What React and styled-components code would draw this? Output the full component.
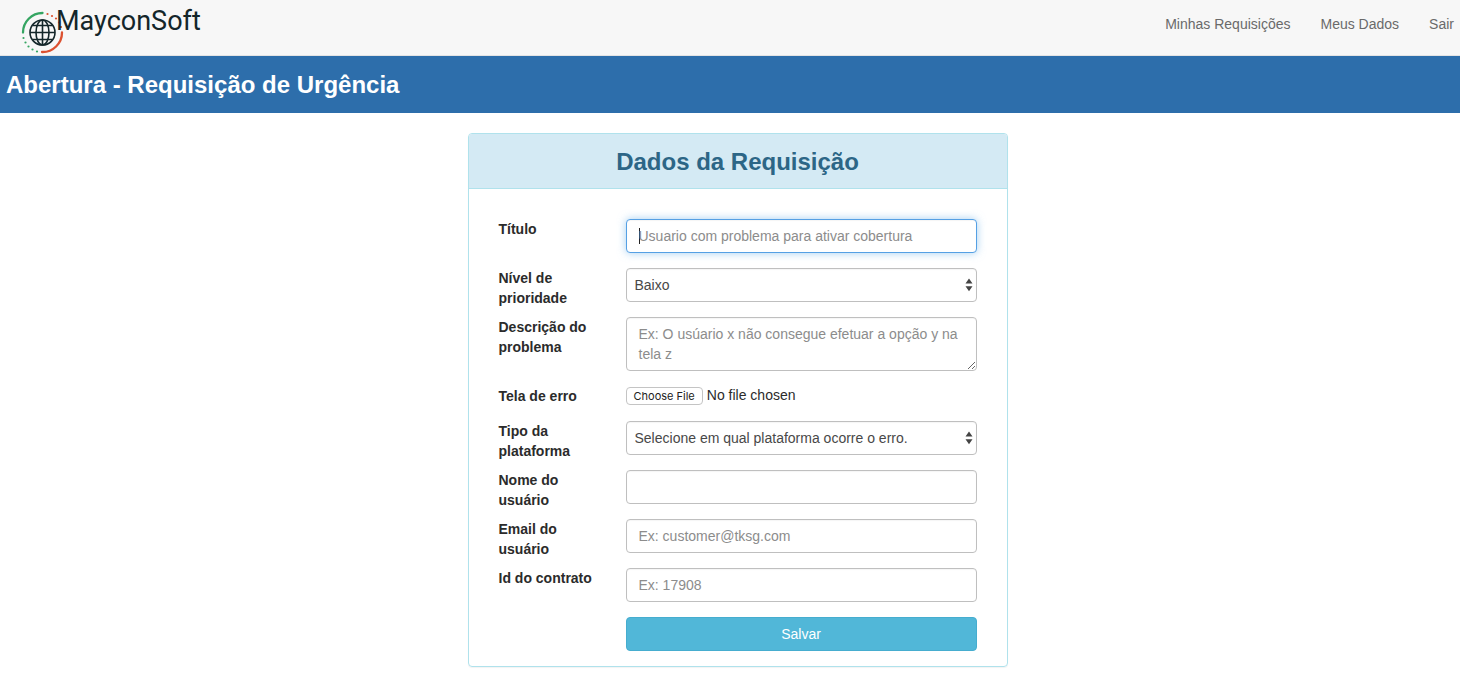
import React from "react";
import styled, { createGlobalStyle, css } from "styled-components";

const GlobalStyle = createGlobalStyle`
  *, *::before, *::after { box-sizing: border-box; }
  body {
    margin: 0;
    background: #fff;
    color: #2b2b2b;
    font: 14px/20px "Helvetica Neue", "Liberation Sans", Arial, sans-serif;
  }
`;

const Navbar = styled.nav`
  display: flex;
  justify-content: space-between;
  align-items: flex-start;
  height: 56px;
  padding: 0 6px 0 20px;
  background: #f7f7f7;
  border-bottom: 1px solid #e4e4e4;
`;

const Brand = styled.a`
  display: flex;
  align-items: flex-start;
  color: #14262a;
  text-decoration: none;
`;

const LogoMark = styled.svg`
  width: 44px;
  height: 44px;
  margin-top: 10px;
`;

const BrandName = styled.span`
  margin: 5px 0 0 -8px;
  font: 400 27px/32px Roboto, sans-serif;
`;

const NavLinks = styled.div`
  display: flex;
  gap: 30px;
  padding-top: 14px;
`;

const NavLink = styled.a`
  color: #6a6a6a;
  text-decoration: none;
`;

const Banner = styled.header`
  padding: 16px 6px 15px;
  background: #2d6eab;
`;

const BannerTitle = styled.h1`
  margin: 0;
  color: #fff;
  font-size: 24px;
  line-height: 26px;
  font-weight: 700;
`;

const Content = styled.main`
  display: flex;
  justify-content: center;
  padding: 20px 0 18px 15px;
`;

const Panel = styled.section`
  width: 100%;
  max-width: 540px;
  border: 1px solid #b0e2ec;
  border-radius: 4px;
  box-shadow: 0 1px 1px rgba(0, 0, 0, 0.05);
  overflow: hidden;
`;

const PanelHeading = styled.h2`
  margin: 0;
  padding: 15px 15px 13px;
  background: #d4eaf4;
  border-bottom: 1px solid #b0e2ec;
  color: #2c6686;
  font-size: 24px;
  line-height: 26px;
  font-weight: 700;
  text-align: center;
`;

const Form = styled.form`
  display: grid;
  gap: 15px;
  padding: 30px 30px 15px;
`;

const Row = styled.div`
  display: grid;
  grid-template-columns: 97px 1fr;
  column-gap: 30px;
  align-items: start;
`;

/* Two-line labels may run into the gap below their row. */
const Label = styled.label`
  margin-bottom: -10px;
  font-weight: 700;
`;

const control = css`
  display: block;
  width: 100%;
  height: 34px;
  padding: 6px 12px;
  border: 1px solid #bfbfbf;
  border-radius: 4px;
  background: #fff;
  box-shadow: inset 0 1px 1px rgba(0, 0, 0, 0.04);
  color: #484848;
  font: inherit;

  &::placeholder {
    color: #8c8c8c;
    opacity: 1;
  }

  &:focus {
    outline: 0;
    border-color: #55a0e4;
    box-shadow: inset 0 1px 1px rgba(0, 0, 0, 0.04), 0 0 8px rgba(102, 175, 233, 0.6);
  }
`;

/* While the field is empty, a steady caret stands before the placeholder. */
const TextInput = styled.input`
  ${control}

  &:focus:placeholder-shown {
    caret-color: transparent;
    background: #fff linear-gradient(#222, #222) 12px center / 1px 16px no-repeat;
  }
`;

const TextArea = styled.textarea`
  ${control}
  height: 54px;
  resize: vertical;
  overflow: auto;
`;

const SelectBox = styled.div`
  position: relative;
`;

const Select = styled.select`
  ${control}
  appearance: none;
  padding: 6px 24px 6px 8px;
`;

const SelectArrows = styled.svg`
  position: absolute;
  top: 10px;
  right: 4px;
  width: 8px;
  height: 14px;
  pointer-events: none;
`;

const FileInput = styled.input`
  display: block;
  width: 100%;
  height: 20px;
  color: #2b2b2b;
  font: inherit;
  line-height: 18px;

  &::file-selector-button {
    height: 18px;
    margin: 0 4px 0 0;
    padding: 0 7px;
    border: 1px solid #c4c4c4;
    border-radius: 4px;
    background: #fff;
    color: #222;
    font: 400 11px/16px Inter, sans-serif;
  }
`;

const SaveButton = styled.button`
  grid-column: 2;
  height: 34px;
  border: 1px solid #46adcf;
  border-radius: 4px;
  background: #51b7d8;
  color: #fff;
  font: inherit;
`;

function Logo() {
  return (
    <LogoMark viewBox="0 0 44 44" fill="none" aria-hidden="true">
      <g strokeWidth="2.3" strokeLinecap="round">
        <path d="M3 22.5A19.5 19.5 0 0 1 22.5 3" stroke="#35a562" />
        <path d="M42 22.5A19.5 19.5 0 0 1 22 42" stroke="#dc5130" />
      </g>
      <g fill="#35a562">
        <circle cx="3.5" cy="28" r="1.1" />
        <circle cx="5.5" cy="32.5" r="1.1" />
        <circle cx="8.5" cy="36.5" r="1.1" />
        <circle cx="12.5" cy="39.5" r="1.1" />
        <circle cx="17" cy="41.5" r="1.1" />
      </g>
      <g fill="#dc5130">
        <circle cx="27.5" cy="4" r="1.1" />
        <circle cx="32" cy="6" r="1.1" />
        <circle cx="36" cy="8.5" r="1.1" />
        <circle cx="39" cy="12.5" r="1.1" />
        <circle cx="41" cy="17" r="1.1" />
      </g>
      <g stroke="#14262a" strokeWidth="1.6">
        <circle cx="22.5" cy="22.5" r="12.5" />
        <ellipse cx="22.5" cy="22.5" rx="6.5" ry="12.5" />
        <path d="M22.5 10V35M10 22.5H35M12.500 15.5H32.5M12.5 29.5H32.5" />
      </g>
    </LogoMark>
  );
}

function SelectField({ id, children }) {
  return (
    <SelectBox>
      <Select id={id}>{children}</Select>
      <SelectArrows viewBox="0 0 8 14" fill="#444" aria-hidden="true">
        <path d="M4 0.5L7.5 5.5H0.5ZM4 13.2L0.5 8.200H7.5Z" />
      </SelectArrows>
    </SelectBox>
  );
}

function Field({ id, label, children }) {
  return (
    <Row>
      <Label htmlFor={id}>{label}</Label>
      {children}
    </Row>
  );
}

export default function App() {
  return (
    <>
      <GlobalStyle />
      <Navbar>
        <Brand href="#">
          <Logo />
          <BrandName>MayconSoft</BrandName>
        </Brand>
        <NavLinks>
          <NavLink href="#requisicoes">Minhas Requisições</NavLink>
          <NavLink href="#dados">Meus Dados</NavLink>
          <NavLink href="#sair">Sair</NavLink>
        </NavLinks>
      </Navbar>
      <Banner>
        <BannerTitle>Abertura - Requisição de Urgência</BannerTitle>
      </Banner>
      <Content>
        <Panel>
          <PanelHeading>Dados da Requisição</PanelHeading>
          <Form onSubmit={(event) => event.preventDefault()}>
            <Field id="titulo" label="Título">
              <TextInput
                id="titulo"
                type="text"
                placeholder="Usuario com problema para ativar cobertura"
                autoFocus
              />
            </Field>
            <Field id="nivel" label="Nível de prioridade">
              <SelectField id="nivel">
                <option>Baixo</option>
              </SelectField>
            </Field>
            <Field id="descricao" label="Descrição do problema">
              <TextArea
                id="descricao"
                placeholder="Ex: O usúario x não consegue efetuar a opção y na tela z"
              />
            </Field>
            <Field id="tela" label="Tela de erro">
              <FileInput id="tela" type="file" />
            </Field>
            <Field id="plataforma" label="Tipo da plataforma">
              <SelectField id="plataforma">
                <option>Selecione em qual plataforma ocorre o erro.</option>
              </SelectField>
            </Field>
            <Field id="nome" label="Nome do usuário">
              <TextInput id="nome" type="text" />
            </Field>
            <Field id="email" label="Email do usuário">
              <TextInput id="email" type="email" placeholder="Ex: customer@tksg.com" />
            </Field>
            <Field id="contrato" label="Id do contrato">
              <TextInput id="contrato" type="text" placeholder="Ex: 17908" />
            </Field>
            <Row>
              <SaveButton type="submit">Salvar</SaveButton>
            </Row>
          </Form>
        </Panel>
      </Content>
    </>
  );
}
